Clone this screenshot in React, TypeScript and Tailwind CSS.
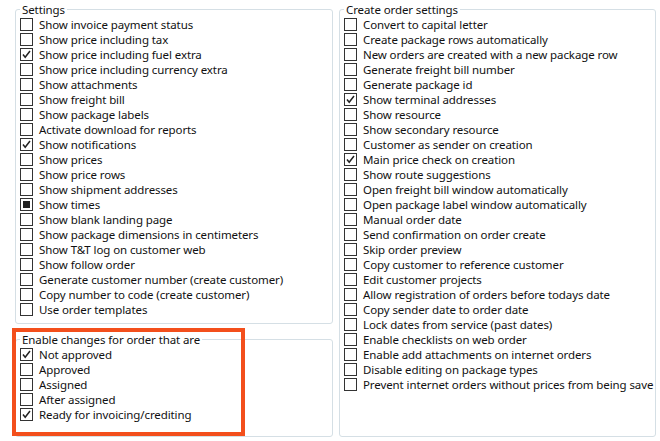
import React from 'react';

type Item = { label: string; state?: 'checked' | 'mixed' };

const SETTINGS: Item[] = [
  { label: 'Show invoice payment status' },
  { label: 'Show price including tax' },
  { label: 'Show price including fuel extra', state: 'checked' },
  { label: 'Show price including currency extra' },
  { label: 'Show attachments' },
  { label: 'Show freight bill' },
  { label: 'Show package labels' },
  { label: 'Activate download for reports' },
  { label: 'Show notifications', state: 'checked' },
  { label: 'Show prices' },
  { label: 'Show price rows' },
  { label: 'Show shipment addresses' },
  { label: 'Show times', state: 'mixed' },
  { label: 'Show blank landing page' },
  { label: 'Show package dimensions in centimeters' },
  { label: 'Show T&T log on customer web' },
  { label: 'Show follow order' },
  { label: 'Generate customer number (create customer)' },
  { label: 'Copy number to code (create customer)' },
  { label: 'Use order templates' },
];

const ENABLE: Item[] = [
  { label: 'Not approved', state: 'checked' },
  { label: 'Approved' },
  { label: 'Assigned' },
  { label: 'After assigned' },
  { label: 'Ready for invoicing/crediting', state: 'checked' },
];

const CREATE: Item[] = [
  { label: 'Convert to capital letter' },
  { label: 'Create package rows automatically' },
  { label: 'New orders are created with a new package row' },
  { label: 'Generate freight bill number' },
  { label: 'Generate package id' },
  { label: 'Show terminal addresses', state: 'checked' },
  { label: 'Show resource' },
  { label: 'Show secondary resource' },
  { label: 'Customer as sender on creation' },
  { label: 'Main price check on creation', state: 'checked' },
  { label: 'Show route suggestions' },
  { label: 'Open freight bill window automatically' },
  { label: 'Open package label window automatically' },
  { label: 'Manual order date' },
  { label: 'Send confirmation on order create' },
  { label: 'Skip order preview' },
  { label: 'Copy customer to reference customer' },
  { label: 'Edit customer projects' },
  { label: 'Allow registration of orders before todays date' },
  { label: 'Copy sender date to order date' },
  { label: 'Lock dates from service (past dates)' },
  { label: 'Enable checklists on web order' },
  { label: 'Enable add attachments on internet orders' },
  { label: 'Disable editing on package types' },
  { label: 'Prevent internet orders without prices from being save' },
];

function Box({ state }: { state?: 'checked' | 'mixed' }) {
  return (
    <span className="flex h-[13px] w-[13px] shrink-0 items-center justify-center border border-[#333333] bg-white">
      {state === 'checked' && (
        <svg width="11" height="11" viewBox="0 0 11 11">
          <path d="M2 5.5 L4.2 8.3 L9 2" fill="none" stroke="#222" strokeWidth="1.5" />
        </svg>
      )}
      {state === 'mixed' && <span className="h-[7px] w-[7px] bg-[#222]" />}
    </span>
  );
}

function Row({ item }: { item: Item }) {
  return (
    <div className="flex h-[15px] items-center gap-[6px] whitespace-nowrap">
      <Box state={item.state} />
      <span>{item.label}</span>
    </div>
  );
}

function Group({ title, items, className }: { title: string; items: Item[]; className?: string }) {
  return (
    <fieldset className={`min-w-0 rounded-[3px] border border-[#d5dfe5] pl-[4px] ${className ?? ''}`}>
      <legend className="px-[2px] leading-[15px]">{title}</legend>
      <div className="flex flex-col">
        {items.map(i => (
          <Row key={i.label} item={i} />
        ))}
      </div>
    </fieldset>
  );
}

export default function App() {
  return (
    <div
      className="flex h-[441px] w-[660px] gap-[6px] overflow-hidden bg-white pb-[4px] pl-[15px] pr-[4px] pt-[2px] text-[11.5px] tracking-[-0.1px] text-[#111]"
      style={{ fontFamily: '"Noto Sans", sans-serif' }}
    >
      <div className="flex w-[318px] shrink-0 flex-col gap-[8px]">
        <Group title="Settings" items={SETTINGS} className="h-[322px]" />
        <div className="relative flex-1">
          <Group title="Enable changes for order that are" items={ENABLE} className="h-full" />
          <div className="absolute left-[-3px] top-[-4px] h-[108px] w-[233px] border-[4px] border-[#f34f1c]" />
        </div>
      </div>
      <Group title="Create order settings" items={CREATE} className="flex-1 overflow-hidden" />
    </div>
  );
}
